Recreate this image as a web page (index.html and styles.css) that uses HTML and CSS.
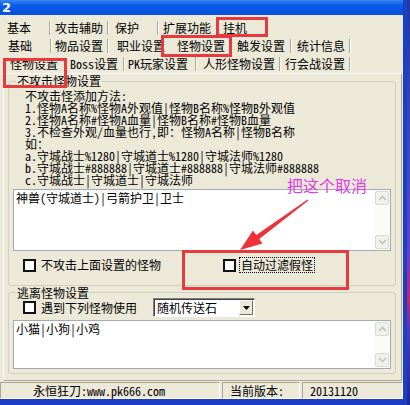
FILE: index.html
```html
<!doctype html>
<html>
	<head>
		<meta charset="utf-8">
		<link rel="stylesheet" href="styles.css">
	</head>
	<body>
		<div class="window">
			<div class="titlebar">2</div>

			<div class="tabrow row1">
				<span class="tab w46 p4">基本</span><i class="sep"></i>
				<span class="tab w56 p4">攻击辅助</span><i class="sep"></i>
				<span class="tab w48 p6">保护</span><i class="sep"></i>
				<span class="tab w56 p4">扩展功能</span>
				<span class="tab w52 p8">挂机</span>
			</div>
			<div class="tabrow row2">
				<span class="tab w47 p5">基础</span><i class="sep"></i>
				<span class="tab w55 p3">物品设置</span><i class="sep"></i>
				<span class="tab w59 p8">职业设置</span>
				<span class="tab w64 p9">怪物设置</span>
				<span class="tab w58 p5">触发设置</span><i class="sep"></i>
				<span class="tab w57 p5">统计信息</span><i class="sep"></i>
			</div>
			<div class="tabrow row3">
				<span class="tab w63 p7">怪物设置</span>
				<span class="tab w57 p4">Boss设置</span><i class="sep"></i>
				<span class="tab w70 p3">PK玩家设置</span><i class="sep"></i>
				<span class="tab w82 p6">人形怪物设置</span><i class="sep"></i>
				<span class="tab w68 p4">行会战设置</span><i class="sep"></i>
			</div>

			<div class="page">
				<fieldset class="group">
					<legend>不攻击怪物设置</legend>
					<div class="help">
						<div>不攻击怪添加方法:</div>
						<div>1.怪物A名称%怪物A外观值|怪物B名称%怪物B外观值</div>
						<div>2.怪物A名称#怪物A血量|怪物B名称#怪物B血量</div>
						<div>3.不检查外观/血量也行,即：怪物A名称|怪物B名称</div>
						<div>如：</div>
						<div>a.守城战士%1280|守城道士%1280|守城法师%1280</div>
						<div>b.守城战士#888888|守城道士#888888|守城法师#888888</div>
						<div>c.守城战士|守城道士|守城法师</div>
					</div>
					<div class="memo tall">
						<div class="memo-text">神兽(守城道士)|弓箭护卫|卫士</div>
						<div class="vscroll">
							<span class="sbtn"><svg width="9" height="6" viewBox="0 0 9 6"><polyline points="1,5 4.5,1.5 8,5" /></svg></span>
							<span class="sbtn"><svg width="9" height="6" viewBox="0 0 9 6"><polyline points="1,1 4.5,4.5 8,1" /></svg></span>
						</div>
					</div>
					<div class="checks">
						<label class="check wide"><span class="box"></span>不攻击上面设置的怪物</label>
						<label class="check"><span class="box"></span><span class="focus">自动过滤假怪</span></label>
					</div>
				</fieldset>

				<fieldset class="group flee">
					<legend>逃离怪物设置</legend>
					<div class="checks top">
						<label class="check use"><span class="box"></span>遇到下列怪物使用</label>
						<div class="combo">
							<span class="combo-text">随机传送石</span>
							<span class="combo-btn"><svg width="7" height="4" viewBox="0 0 7 4"><polygon points="0,0 7,0 3.5,4" /></svg></span>
						</div>
					</div>
					<div class="memo short">
						<div class="memo-text">小猫|小狗|小鸡</div>
						<div class="vscroll">
							<span class="sbtn"><svg width="9" height="6" viewBox="0 0 9 6"><polyline points="1,5 4.5,1.5 8,5" /></svg></span>
							<span class="sbtn"><svg width="9" height="6" viewBox="0 0 9 6"><polyline points="1,1 4.5,4.5 8,1" /></svg></span>
						</div>
					</div>
				</fieldset>
			</div>

			<div class="statusbar">
				<div class="panel site">永恒狂刀:www.pk666.com</div>
				<div class="panel ver-label">当前版本:</div>
				<div class="panel ver">20131120</div>
			</div>

			<!-- annotations drawn over the screenshot -->
			<svg class="marks" width="410" height="405" viewBox="0 0 410 405">
				<rect x="217.5" y="18.5" width="49" height="17" />
				<rect x="162.5" y="36.5" width="68" height="19" />
				<rect x="4.5" y="59.5" width="61" height="27" />
				<rect x="183.5" y="251.5" width="164" height="37" />
				<polygon class="arrow" points="307.6,199.5 256.3,234.9 253,230.4 240,250 262.6,243.4 259.3,238.9 308.4,200.5" />
			</svg>
			<div class="note">把这个取消</div>
		</div>
	</body>
</html>
```

FILE: styles.css
```css
html, body {
	margin: 0;
}

body {
	width: 410px;
	height: 405px;
	overflow: hidden;
	background: linear-gradient(#24389e, #3b4cc0 40%, #6a3dc8 62%, #d0206a 74%, #4a3ab8 82%, #1a2a90);
	font-family: "Noto Sans Mono CJK SC", "Noto Sans CJK SC", monospace;
	font-size: 12px;
	color: #000;
}

.window {
	position: relative;
	width: 403px;
	height: 399px;
	background: #ece9d8;
	border-right: 4px solid #1c3fc8;
	border-bottom: 6px solid #1b3cc4;
	display: flex;
	flex-direction: column;
}

.titlebar {
	height: 15px;
	padding-left: 2px;
	background: linear-gradient(#3a84f4, #0a5ae8 35%, #0550dc);
	color: #fff;
	font: bold 13px/15px "DejaVu Sans", sans-serif;
}

/* tab rows */
.tabrow {
	display: flex;
	align-items: flex-start;
	padding-left: 3px;
	box-sizing: border-box;
}
.row1 {
	height: 20px;
	padding-top: 6px;
}
.row2 {
	height: 19px;
	padding-top: 4px;
}
.row3 {
	height: 19px;
	padding-top: 3px;
}

.tab {
	height: 14px;
	line-height: 14px;
	white-space: nowrap;
	box-sizing: border-box;
}
.sep {
	height: 14px;
	border-left: 1px solid #aca899;
	border-right: 1px solid #fff;
}

.w46 { width: 46px; }
.w47 { width: 47px; }
.w48 { width: 48px; }
.w52 { width: 52px; }
.w55 { width: 55px; }
.w56 { width: 56px; }
.w57 { width: 57px; }
.w58 { width: 58px; }
.w59 { width: 59px; }
.w63 { width: 63px; }
.w64 { width: 64px; }
.w68 { width: 68px; }
.w70 { width: 70px; }
.w82 { width: 82px; }

.p3 { padding-left: 3px; }
.p4 { padding-left: 4px; }
.p5 { padding-left: 5px; }
.p6 { padding-left: 6px; }
.p7 { padding-left: 7px; }
.p8 { padding-left: 8px; }
.p9 { padding-left: 9px; }

/* tab page */
.page {
	margin-left: 3px;
	width: 399px;
	height: 308px;
	box-sizing: border-box;
	padding: 1px 0 0 4px;
	border: 1px solid;
	border-color: #fff #aca899 #aca899 #fff;
}

.group {
	width: 388px;
	box-sizing: border-box;
	margin: 0;
	padding: 0 4px 13px;
	border: 1px solid #d0d0bf;
	border-radius: 3px;
	min-width: 0;
}
.group legend {
	padding: 0 1px;
	margin-left: 3px;
	line-height: 12px;
}
.group.flee {
	margin-top: 1px;
	padding-bottom: 4px;
}
.group.flee legend {
	line-height: 11px;
}

.help {
	margin: 3px 0 0 12px;
	line-height: 12px;
	white-space: nowrap;
}

.memo {
	display: flex;
	box-sizing: border-box;
	border: 1px solid #a3aab5;
	background: #fff;
	margin-top: 3px;
}
.memo.tall {
	height: 62px;
}
.memo.short {
	height: 49px;
}
.memo-text {
	flex: 1;
	padding: 2px 2px;
	line-height: 12px;
}

.vscroll {
	width: 16px;
	display: flex;
	flex-direction: column;
	justify-content: space-between;
	background: #fbfbf8;
}
.sbtn {
	height: 14px;
	margin: 1px;
	display: flex;
	align-items: center;
	justify-content: center;
	background: #f1f0ea;
	border: 1px solid #dcdbd2;
	border-radius: 2px;
	box-sizing: border-box;
}
.sbtn polyline {
	fill: none;
	stroke: #c4c4c4;
	stroke-width: 1.6;
}

.checks {
	display: flex;
	align-items: center;
	height: 14px;
	margin-top: 7px;
	white-space: nowrap;
}
.checks.top {
	height: 19px;
	margin-top: 0;
}
.check {
	display: flex;
	align-items: center;
	line-height: 14px;
}
.check:first-child {
	margin-left: 10px;
}
.check.wide {
	width: 200px;
}
.check.use {
	width: 130px;
}
.box {
	width: 13px;
	height: 13px;
	box-sizing: border-box;
	border: 2px solid #111;
	background: #fff;
	margin-right: 5px;
	flex: none;
}
.focus {
	outline: 1px dotted #000;
	outline-offset: 0;
	padding: 0 1px;
	margin-left: -1px;
}

.combo {
	width: 102px;
	height: 19px;
	box-sizing: border-box;
	display: flex;
	align-items: center;
	background: #fff;
	border: 1px solid;
	border-color: #808080 #fff #fff #808080;
	box-shadow: inset 1px 1px #404040;
}
.combo-text {
	flex: 1;
	padding-left: 3px;
	line-height: 14px;
}
.combo-btn {
	width: 14px;
	height: 15px;
	margin-right: 1px;
	box-sizing: border-box;
	display: flex;
	align-items: center;
	justify-content: center;
	background: #ece9d8;
	border: 1px solid;
	border-color: #fff #716f64 #716f64 #fff;
}

/* status bar */
.statusbar {
	display: flex;
	gap: 2px;
	height: 18px;
	padding-top: 1px;
	box-sizing: border-box;
}
.panel {
	box-sizing: border-box;
	border: 1px solid;
	border-color: #aca899 #fff #fff #aca899;
	line-height: 15px;
	white-space: nowrap;
}
.site {
	width: 220px;
	padding-left: 32px;
}
.ver-label {
	width: 78px;
	padding-left: 7px;
}
.ver {
	flex: 1;
	padding-left: 7px;
}

/* annotations */
.marks {
	position: absolute;
	left: 0;
	top: 0;
	pointer-events: none;
}
.marks rect {
	fill: none;
	stroke: #e63a3e;
	stroke-width: 3;
}
.marks .arrow {
	fill: #ee3338;
	stroke: none;
}

.note {
	position: absolute;
	left: 287px;
	top: 175px;
	font: 16px/20px "Noto Sans CJK SC", sans-serif;
	color: #e03ce6;
}
```
